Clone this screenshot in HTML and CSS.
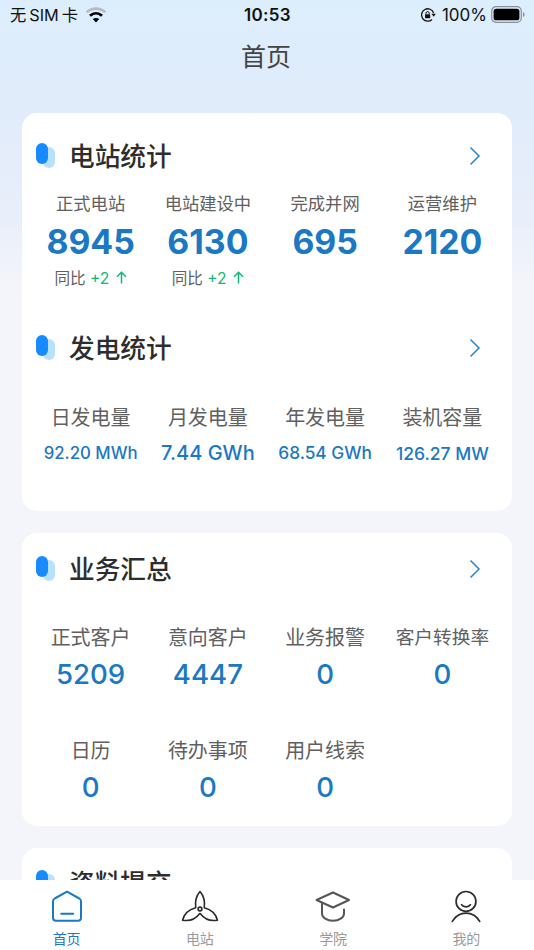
FILE: index.html
```html
<!DOCTYPE html>
<html lang="zh-CN">
<head>
<meta charset="UTF-8"/>
<meta name="viewport" content="width=device-width, initial-scale=1"/>
<title>首页</title>
<link rel="stylesheet" href="styles.css">
</head>
<body>
<div class="page">
	<div class="status-bar">
		<div class="status-left">
			<span class="carrier">无<span class="sim">SIM</span>卡</span>
			<svg class="wifi" width="22" height="16" viewBox="0 0 22 16">
				<path d="M1.800 5.200C7 .4 15 .4 20.200 5.200" fill="none" stroke="#aebdca" stroke-width="2.800"/>
				<path d="M5 8.800C8.600 5.600 13.400 5.600 17 8.800" fill="none" stroke="#000" stroke-width="2.800"/>
				<path d="M11 15.600L7.800 12.100C9.700 10.500 12.300 10.500 14.200 12.100Z" fill="#000"/>
			</svg>
		</div>
		<div class="status-time">10:53</div>
		<div class="status-right">
			<svg width="16" height="16" viewBox="0 0 16 16">
				<path d="M12 12.500A6.200 6.200 0 1 1 13.600 6" fill="none" stroke="#111" stroke-width="1.300"/>
				<path d="M11.400 6.800h4.400l-2.100 3z" fill="#111"/>
				<rect x="5" y="7.200" width="5.200" height="4" rx=".6" fill="#111"/>
				<path d="M6 7.400V6.200a1.600 1.600 0 0 1 3.200 0v1.200" fill="none" stroke="#111" stroke-width="1"/>
			</svg>
			<span class="percent">100%</span>
			<svg width="34" height="17" viewBox="0 0 34 17">
				<rect x=".7" y=".7" width="29.600" height="15.600" rx="4.400" fill="none" stroke="#84919b" stroke-width="1.200"/>
				<rect x="2.600" y="2.700" width="25.800" height="11.600" rx="2.600" fill="#000"/>
				<path d="M32 6v5c1-.4 1.600-1.400 1.600-2.500S33 6.400 32 6z" fill="#84919b"/>
			</svg>
		</div>
	</div>
	<div class="nav-title">首页</div>

	<div class="content">
		<div class="card">
			<div class="card-head">
				<i class="mark"></i><h2>电站统计</h2>
				<svg class="arrow" width="12" height="20" viewBox="0 0 12 20"><path d="M1.500 1.500l8.500 8.500-8.500 8.500"/></svg>
			</div>
			<div class="grid station">
				<div class="item"><span class="label">正式电站</span><b class="num">8945</b><span class="rate">同比 <em>+2</em> <svg width="11" height="13" viewBox="0 0 11 13"><path d="M5.500 12.500V1.300M1 5.800l4.500-4.500L10 5.800"/></svg></span></div>
				<div class="item"><span class="label">电站建设中</span><b class="num">6130</b><span class="rate">同比 <em>+2</em> <svg width="11" height="13" viewBox="0 0 11 13"><path d="M5.500 12.500V1.300M1 5.800l4.500-4.500L10 5.800"/></svg></span></div>
				<div class="item"><span class="label">完成并网</span><b class="num">695</b></div>
				<div class="item"><span class="label">运营维护</span><b class="num">2120</b></div>
			</div>
			<div class="card-head second">
				<i class="mark"></i><h2>发电统计</h2>
				<svg class="arrow" width="12" height="20" viewBox="0 0 12 20"><path d="M1.500 1.500l8.500 8.500-8.500 8.500"/></svg>
			</div>
			<div class="grid power">
				<div class="item"><span class="label">日发电量</span><span class="value">92.20 MWh</span></div>
				<div class="item"><span class="label">月发电量</span><span class="value large">7.44 GWh</span></div>
				<div class="item"><span class="label">年发电量</span><span class="value mid">68.54 GWh</span></div>
				<div class="item"><span class="label">装机容量</span><span class="value last">126.27 MW</span></div>
			</div>
		</div>

		<div class="card">
			<div class="card-head">
				<i class="mark"></i><h2>业务汇总</h2>
				<svg class="arrow" width="12" height="20" viewBox="0 0 12 20"><path d="M1.500 1.500l8.500 8.500-8.500 8.500"/></svg>
			</div>
			<div class="grid business">
				<div class="item"><span class="label">正式客户</span><span class="count">5209</span></div>
				<div class="item"><span class="label">意向客户</span><span class="count">4447</span></div>
				<div class="item"><span class="label">业务报警</span><span class="count">0</span></div>
				<div class="item"><span class="label small">客户转换率</span><span class="count">0</span></div>
				<div class="item"><span class="label">日历</span><span class="count">0</span></div>
				<div class="item"><span class="label">待办事项</span><span class="count">0</span></div>
				<div class="item"><span class="label">用户线索</span><span class="count">0</span></div>
			</div>
		</div>

		<div class="card">
			<div class="card-head">
				<i class="mark"></i><h2>资料提交</h2>
			</div>
		</div>
	</div>

	<div class="tab-bar">
		<a class="tab active">
			<svg width="40" height="34" viewBox="0 0 40 34" fill="none" stroke="#1b78c2" stroke-width="2" stroke-linejoin="round" stroke-linecap="round">
				<path d="M20 2.700L32.300 9.500Q34 10.500 34 12.400V28.800Q34 31.800 31 31.800H9Q6 31.800 6 28.800V12.400Q6 10.500 7.700 9.500Z"/>
				<path d="M14.200 24.800h12"/>
			</svg>
			<span>首页</span>
		</a>
		<a class="tab">
			<svg width="40" height="34" viewBox="0 0 40 34" fill="none" stroke="#2b2b2b" stroke-width="1.600" stroke-linejoin="round">
				<path d="M15.800 19C14.800 12.500 16.500 6.500 20 2.500C23.500 6.500 25.200 12.500 24.200 19"/>
				<path d="M15.800 18.700C9 20.500 4 25 2.600 31.200C9.500 32.500 16 29.500 20 24.200"/>
				<path d="M24.200 18.700C31 20.500 36 25 37.400 31.200C30.500 32.500 24 29.500 20 24.200"/>
				<circle cx="20" cy="20" r="1.900"/>
			</svg>
			<span>电站</span>
		</a>
		<a class="tab">
			<svg width="40" height="34" viewBox="0 0 40 34" fill="none" stroke="#555" stroke-width="2" stroke-linejoin="round" stroke-linecap="round">
				<path d="M3.500 11L20 3.500L36 11L20 18.500Z"/>
				<path d="M9 14V24.500C9 28.500 14 31.700 20 31.700S31 28.500 31 24.500V20.500"/>
			</svg>
			<span>学院</span>
		</a>
		<a class="tab">
			<svg width="40" height="34" viewBox="0 0 40 34" fill="none" stroke="#2b2b2b" stroke-width="1.700" stroke-linecap="round">
				<circle cx="20" cy="12.400" r="9.900"/>
				<path d="M15.600 15.800C17.600 18.600 22.400 18.600 24.400 15.800"/>
				<path d="M6.300 32.400C9.600 27 14.500 24.200 20 24.200S30.600 27 33.700 32.400"/>
			</svg>
			<span>我的</span>
		</a>
	</div>
</div>
</body>
</html>
```
FILE: styles.css
```css
* {
	box-sizing: border-box;
}
body {
	margin: 0;
	font-family: Inter, "Noto Sans CJK SC", sans-serif;
	color: #606060;
}
.page {
	display: flex;
	flex-direction: column;
	height: 950px;
	overflow: hidden;
	background: linear-gradient(180deg, #dceefd 0, #e1ecfa 110px, #e5edfa 165px, #e9effa 220px, #f4f5fa 290px, #f4f5fa 100%);
}

/* status bar */
.status-bar {
	display: grid;
	grid-template-columns: 1fr auto 1fr;
	align-items: center;
	height: 30px;
	padding: 0 9px 0 10px;
	color: #111;
	font-size: 17px;
}
.status-left,
.status-right {
	display: flex;
	align-items: center;
}
.status-left {
	gap: 7px;
}
.carrier {
	font-size: 16.3px;
	line-height: 26px;
	padding-bottom: 1px;
}
.sim {
	margin: 0 3px;
}
.status-right {
	justify-content: flex-end;
	gap: 6px;
}
.status-right svg:last-child {
	margin-left: -2px;
	margin-bottom: 2px;
}
.status-time {
	font-weight: 600;
	letter-spacing: 0.3px;
}
.nav-title {
	height: 83px;
	line-height: 54px;
	text-align: center;
	font-size: 25px;
	padding-right: 2px;
	color: #444;
	flex: none;
}

.content {
	flex: 1;
	min-height: 0;
	overflow: hidden;
	display: flex;
	flex-direction: column;
	gap: 22px;
	padding: 0 22px;
}
.card {
	flex: none;
	background: #fff;
	border-radius: 15px;
	padding: 13px 11px 0 10px;
}
.card:nth-child(1) {
	height: 398px;
	padding-top: 20px;
}
.card:nth-child(2) {
	height: 293px;
}
.card:nth-child(3) {
	height: 200px;
	padding-top: 12px;
}
.card-head {
	display: flex;
	align-items: center;
	height: 46px;
	padding: 0 20.5px 0 4px;
}
.card-head.second {
	margin-top: 32px;
}
.card-head h2 {
	flex: 1;
	margin: 0 0 0 14px;
	padding-top: 1px;
	font-size: 25.7px;
	line-height: 46px;
	font-weight: 500;
	color: #2d2d2d;
}
.mark {
	display: grid;
	width: 19px;
	height: 25px;
	margin-bottom: 2px;
}
.mark::before,
.mark::after {
	content: "";
	grid-area: 1 / 1;
	width: 12px;
	height: 21px;
	border-radius: 6px;
	background: #168bff;
	z-index: 1;
}
.mark::after {
	background: #b8e0ff;
	align-self: end;
	justify-self: end;
	z-index: 0;
}
.arrow {
	margin-bottom: 1px;
}
.arrow path {
	fill: none;
	stroke: #2a85cb;
	stroke-width: 1.5;
}

.grid {
	display: grid;
	grid-template-columns: repeat(4, 1fr);
}
.station {
	margin-top: 8px;
}
.item {
	display: flex;
	flex-direction: column;
	align-items: center;
	white-space: nowrap;
}
.label {
	font-size: 20px;
	line-height: 30px;
}
.station .label {
	font-size: 17.3px;
	line-height: 30px;
	margin-top: 2px;
}
.num {
	font-size: 33.8px;
	line-height: 45px;
	font-weight: 700;
	color: #1b78c2;
}
.rate {
	font-size: 15.6px;
	line-height: 29px;
}
.rate em {
	font-style: normal;
	color: #10b878;
}
.rate svg {
	margin-left: 2px;
}
.rate path {
	fill: none;
	stroke: #10b878;
	stroke-width: 1.5;
}
.power {
	margin-top: 32px;
}
.value {
	display: flex;
	align-items: center;
	height: 40px;
	font-size: 16.8px;
	font-weight: 500;
	color: #1b78c2;
}
.value.large {
	font-size: 20px;
}
.value.mid {
	height: 39px;
	font-size: 17.3px;
}
.value.last {
	font-size: 17.5px;
}
.business {
	margin-top: 30px;
	grid-auto-rows: 112.5px;
}
.business .label {
	line-height: 32px;
}
.business .label.small {
	font-size: 18.7px;
}
.count {
	font-size: 27.6px;
	line-height: 40px;
	font-weight: 500;
	color: #1b78c2;
}

.tab-bar {
	flex: none;
	display: flex;
	height: 70px;
	padding-right: 1px;
	background: #fff;
}
.tab {
	flex: 1;
	display: flex;
	flex-direction: column;
	align-items: center;
	padding-top: 9px;
	font-size: 14px;
	line-height: 31px;
	color: #999;
}
.tab svg {
	flex: none;
}
.tab.active {
	color: #1b78c2;
}
```
